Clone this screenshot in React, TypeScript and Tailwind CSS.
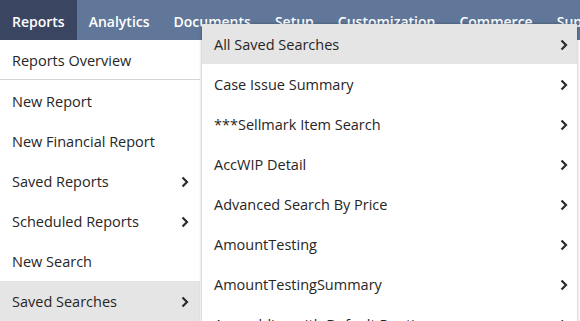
import { ReactNode } from "react"

const tabs = ["Reports", "Analytics", "Documents", "Setup", "Customization", "Commerce", "Support"]

const leftItems: { label: string; sub?: boolean; active?: boolean }[] = [
  { label: "New Report" },
  { label: "New Financial Report" },
  { label: "Saved Reports", sub: true },
  { label: "Scheduled Reports", sub: true },
  { label: "New Search" },
  { label: "Saved Searches", sub: true, active: true },
]

const searches = [
  "All Saved Searches",
  "Case Issue Summary",
  "***Sellmark Item Search",
  "AccWIP Detail",
  "Advanced Search By Price",
  "AmountTesting",
  "AmountTestingSummary",
  "Assemblies with Default Routing",
]

function Chevron() {
  return (
    <svg width="8" height="12" viewBox="0 0 8 12" className="shrink-0">
      <polyline points="1.5,1.5 6,6 1.5,10.5" fill="none" stroke="#2b2b2b" strokeWidth="2.2" />
    </svg>
  )
}

function Row({ children, active, sub, className = "" }: { children: ReactNode; active?: boolean; sub?: boolean; className?: string }) {
  return (
    <div className={`flex h-10 items-center justify-between px-3 pt-[2px] ${active ? "bg-[#e5e5e5]" : "bg-white"} ${className}`}>
      <span className="whitespace-nowrap">{children}</span>
      {sub && <Chevron />}
    </div>
  )
}

export default function App() {
  return (
    <div className="relative h-[321px] w-[580px] overflow-hidden bg-white text-[14.5px] text-[#262626]" style={{ fontFamily: '"Open Sans", "Liberation Sans", sans-serif' }}>
      <nav className="flex h-10 items-center bg-[#607799] text-[14px] font-semibold text-white">
        {tabs.map((t, i) => (
          <div key={t} className={`flex h-10 items-center px-3 pt-[2px] whitespace-nowrap ${i === 0 ? "bg-[#3a4661]" : ""}`}>
            {t}
          </div>
        ))}
      </nav>

      <div className="w-[200px]">
        <Row className="border-b border-[#d4d4d4]">Reports Overview</Row>
        <div className="h-px" />
        {leftItems.map((it) => (
          <Row key={it.label} sub={it.sub} active={it.active} className="pr-[11px]">
            {it.label}
          </Row>
        ))}
      </div>

      <div className="absolute left-[202px] top-[24px] w-[375px] bg-white shadow-[0_0_3px_rgba(0,0,0,0.35)]">
        {searches.map((s, i) => (
          <Row key={s} sub active={i === 0} className="pr-[9px]">
            {s}
          </Row>
        ))}
      </div>
    </div>
  )
}
